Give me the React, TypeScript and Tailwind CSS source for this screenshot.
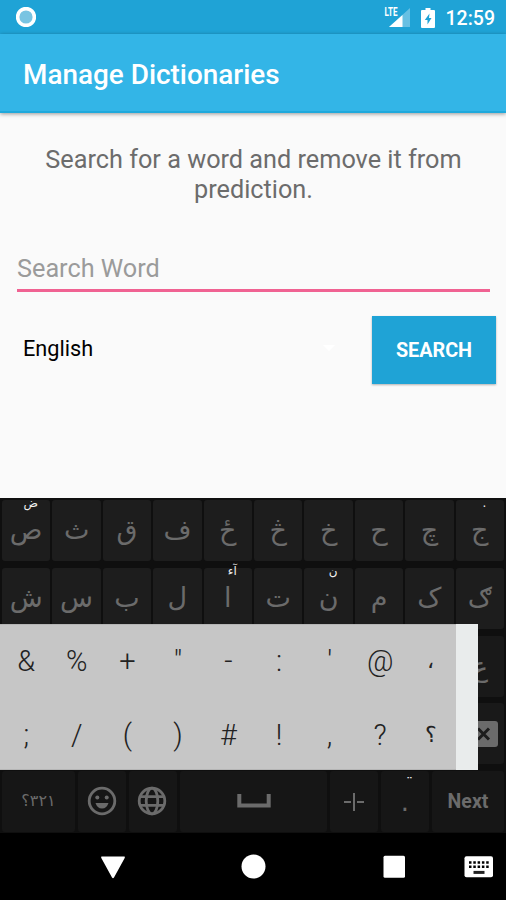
import clsx from "clsx"
import { ReactNode } from "react"

type KeyDef = { char: string; hint?: string }

const rowOne: KeyDef[] = [
  { char: "ص", hint: "ض" },
  { char: "ث" },
  { char: "ق" },
  { char: "ف" },
  { char: "ځ" },
  { char: "څ" },
  { char: "خ" },
  { char: "ح" },
  { char: "چ" },
  { char: "ج", hint: "." },
]

const rowTwo: KeyDef[] = [
  { char: "ش" },
  { char: "س" },
  { char: "ب" },
  { char: "ل" },
  { char: "ا", hint: "آء" },
  { char: "ت" },
  { char: "ن", hint: "ن" },
  { char: "م" },
  { char: "ک" },
  { char: "ګ" },
]

const symbols = ["&", "%", "+", '"', "-", ":", "'", "@", "،", ";", "/", "(", ")", "#", "!", ",", "?", "؟"]

// these two come from the Arabic fallback font, which runs large
const arabicSymbols = ["،", "؟"]

function StatusBar() {
  return (
    <div className="flex h-[34px] items-center bg-[#1fa3d6] pl-4 pr-[11px] text-white">
      <svg width="20" height="20" viewBox="0 0 20 20">
        <circle cx="10" cy="10" r="8.400" fill="#79c4e2" stroke="#fff" strokeWidth="3.600" />
      </svg>
      <svg className="ml-auto" width="26" height="22" viewBox="0 0 26 22">
        <path d="M26 2v19H5z" fill="#8fd0ea" opacity=".65" />
        <path d="M18.500 9v12H5z" fill="#fff" />
        <text
          x="0.500"
          y="10.200"
          textLength="13"
          lengthAdjust="spacingAndGlyphs"
          fill="#fff"
          className="font-['Roboto',sans-serif] text-[12px] font-bold"
        >
          LTE
        </text>
      </svg>
      <svg className="ml-[11px] mt-px" width="14" height="22" viewBox="0 0 14 22">
        <path d="M4.500 1h5v2H13q1 0 1 1v16q0 1-1 1H1q-1 0-1-1V4q0-1 1-1h3.500z" fill="#fff" />
        <path d="M8.500 6.500L3.800 13H6.500v4.500L10.500 11H8z" fill="#1fa3d6" />
      </svg>
      <span className="ml-[11px] mt-[3px] text-[19.5px] font-medium leading-none">12:59</span>
    </div>
  )
}

type KeyProps = { children: ReactNode; className?: string; hint?: string; hintClassName?: string }

function Key({ children, className, hint, hintClassName }: KeyProps) {
  return (
    <div
      className={clsx(
        "relative flex items-center justify-center rounded-[3px] text-[#6b6b6b]",
        className ?? "bg-[#1d1d1d]",
      )}
    >
      {children}
      {hint && (
        <span
          className={clsx(
            "absolute left-0 w-full pl-[9px] text-center text-[12px] leading-[16px] text-[#f0f0f0]",
            hintClassName ?? "-top-[5px]",
          )}
        >
          {hint}
        </span>
      )}
    </div>
  )
}

function LetterRow({ keys }: { keys: KeyDef[] }) {
  return (
    <div className="grid h-[61px] grid-cols-10 gap-x-[2px]">
      {keys.map((key) => (
        <Key key={key.char} hint={key.hint}>
          <span className="mb-[2px] text-[27px] leading-none">{key.char}</span>
        </Key>
      ))}
    </div>
  )
}

function SymbolPopup() {
  return (
    <div className="absolute left-0 top-[126px] flex h-[146px] w-[478px] bg-[#e9ecec]">
      <div className="grid w-[456px] grid-cols-9 grid-rows-[72px_76px] border-y border-[#b5b5b5] bg-[#c6c6c6] pl-px font-['Roboto','DejaVu_Sans',sans-serif] text-[29px] font-light text-[#222]">
        {symbols.map((symbol) => (
          <div key={symbol} className="flex items-center justify-center leading-none">
            <span className={clsx(arabicSymbols.includes(symbol) && "text-[22px]")}>{symbol}</span>
          </div>
        ))}
      </div>
    </div>
  )
}

function SmileIcon() {
  return (
    <svg className="mb-[2px]" width="30" height="30" viewBox="0 0 30 30" fill="none" stroke="#6b6b6b">
      <circle cx="15" cy="15" r="12.800" strokeWidth="2.800" />
      <circle cx="10.300" cy="11.500" r="2" fill="#6b6b6b" stroke="none" />
      <circle cx="19.700" cy="11.500" r="2" fill="#6b6b6b" stroke="none" />
      <path d="M8.500 17h13c-1 3.500-3.200 5.500-6.500 5.500S9.500 20.500 8.500 17z" fill="#6b6b6b" stroke="none" />
    </svg>
  )
}

function GlobeIcon() {
  return (
    <svg
      className="mb-[2px] mr-[2px]"
      width="30"
      height="30"
      viewBox="0 0 30 30"
      fill="none"
      stroke="#6b6b6b"
      strokeWidth="2.800"
    >
      <circle cx="15" cy="15" r="12.800" />
      <ellipse cx="15" cy="15" rx="5.800" ry="12.800" />
      <path d="M3 10.700h24M3 19.300h24" />
    </svg>
  )
}

function Keyboard() {
  return (
    <div className="relative flex h-[335px] flex-col gap-[6.75px] bg-[#0f0f0f] px-[2px] pt-[2px] font-['DejaVu_Sans',sans-serif]">
      <LetterRow keys={rowOne} />
      <LetterRow keys={rowTwo} />
      <div className="flex h-[61px] justify-end">
        <Key className="w-[48px] bg-[#191919]">
          <span className="text-[27px] leading-none">ع</span>
        </Key>
      </div>
      <div className="flex h-[61px] justify-end">
        <Key className="w-[73px] bg-[#191919]">
          <svg className="ml-[23px]" width="38" height="26" viewBox="0 0 38 26">
            <path d="M10 0h25q3 0 3 3v20q0 3-3 3H10L0 13z" fill="#6b6b6b" />
            <path d="M18 7.500l11 11M29 7.500l-11 11" stroke="#1c1c1c" strokeWidth="3" />
          </svg>
        </Key>
      </div>
      <div className="flex h-[61px] gap-[3px]">
        <Key className="w-[73px] bg-[#161616]">
          <bdo dir="ltr" className="mb-px text-[16px]">
            ؟۳۲۱
          </bdo>
        </Key>
        <Key className="w-[48px] bg-[#161616]">
          <SmileIcon />
        </Key>
        <Key className="w-[48px] bg-[#161616]">
          <GlobeIcon />
        </Key>
        <Key className="flex-1 bg-[#161616]">
          <svg className="mb-px" width="34" height="14" viewBox="0 0 34 14">
            <path d="M2.300 0v11.500h29.400V0" fill="none" stroke="#6b6b6b" strokeWidth="4" />
          </svg>
        </Key>
        <Key className="w-[48px] bg-[#161616]">
          <svg width="20" height="18" viewBox="0 0 20 18">
            <path d="M0 9h7M13 9h7M10 0v18" stroke="#6b6b6b" strokeWidth="2" />
          </svg>
        </Key>
        <Key className="w-[48px] bg-[#161616]" hint="¨" hintClassName="top-[4px] text-[14px]">
          <span className="text-[26px] leading-none">.</span>
        </Key>
        <Key className="w-[72px] bg-[#161616]">
          <span className="font-['Roboto',sans-serif] text-[19.5px] font-bold">Next</span>
        </Key>
      </div>
      <SymbolPopup />
    </div>
  )
}

function NavigationBar() {
  return (
    <div className="flex flex-1 items-center bg-black">
      <svg width="506" height="67" viewBox="0 0 506 67" fill="#fff">
        <path d="M102 23.500h22q1.500 0 .7 1.400L114 44.500q-1 1.500-2 0L101.300 24.900Q100.500 23.500 102 23.500z" />
        <circle cx="253.500" cy="33.500" r="12" />
        <rect x="383.500" y="22.700" width="21.500" height="22" rx="1.500" />
        <rect x="464.500" y="23.300" width="28.500" height="21" rx="2" />
        <path d="M469 29.600h20M469 33.800h20" stroke="#000" strokeWidth="2.500" strokeDasharray="2.500 1.800" />
        <path d="M473.500 39.400h11" stroke="#222" strokeWidth="3" />
      </svg>
    </div>
  )
}

export default function App() {
  return (
    <div className="flex h-[900px] w-[506px] flex-col overflow-hidden bg-[#fafafa] font-['Roboto',sans-serif]">
      <StatusBar />
      <header className="flex h-[79px] items-center border-b-2 border-[#1fa9dc] bg-[#33b5e7] pl-[23px] pt-[5px] text-[27.9px] font-medium text-white shadow-[0_1px_4px_rgba(0,0,0,0.4)]">
        Manage Dictionaries
      </header>
      <main className="flex h-[385px] flex-col">
        <p className="mt-[32px] pl-[33px] pr-8 text-center text-[25.25px] leading-[30px] text-[#6c6c6c]">
          Search for a word and remove it from prediction.
        </p>
        <div className="ml-[17px] mr-4 mt-[42px] flex h-[45px] items-center border-b-3 border-[#f06292] pt-px text-[25.25px] text-[#9b9b9b]">
          Search Word
        </div>
        <div className="mt-6 flex items-center pl-[23px] pr-[10px]">
          <span className="mb-px text-[21.7px] text-black">English</span>
          <span className="mb-1 ml-auto mr-[37px] size-0 border-x-[6px] border-t-[6px] border-x-transparent border-t-white"></span>
          <button className="h-[68px] w-[124px] bg-[#1fa3d6] pt-px text-[19.8px] font-bold text-white shadow-[0_1px_2px_rgba(0,0,0,0.3)]">
            SEARCH
          </button>
        </div>
      </main>
      <Keyboard />
      <NavigationBar />
    </div>
  )
}
